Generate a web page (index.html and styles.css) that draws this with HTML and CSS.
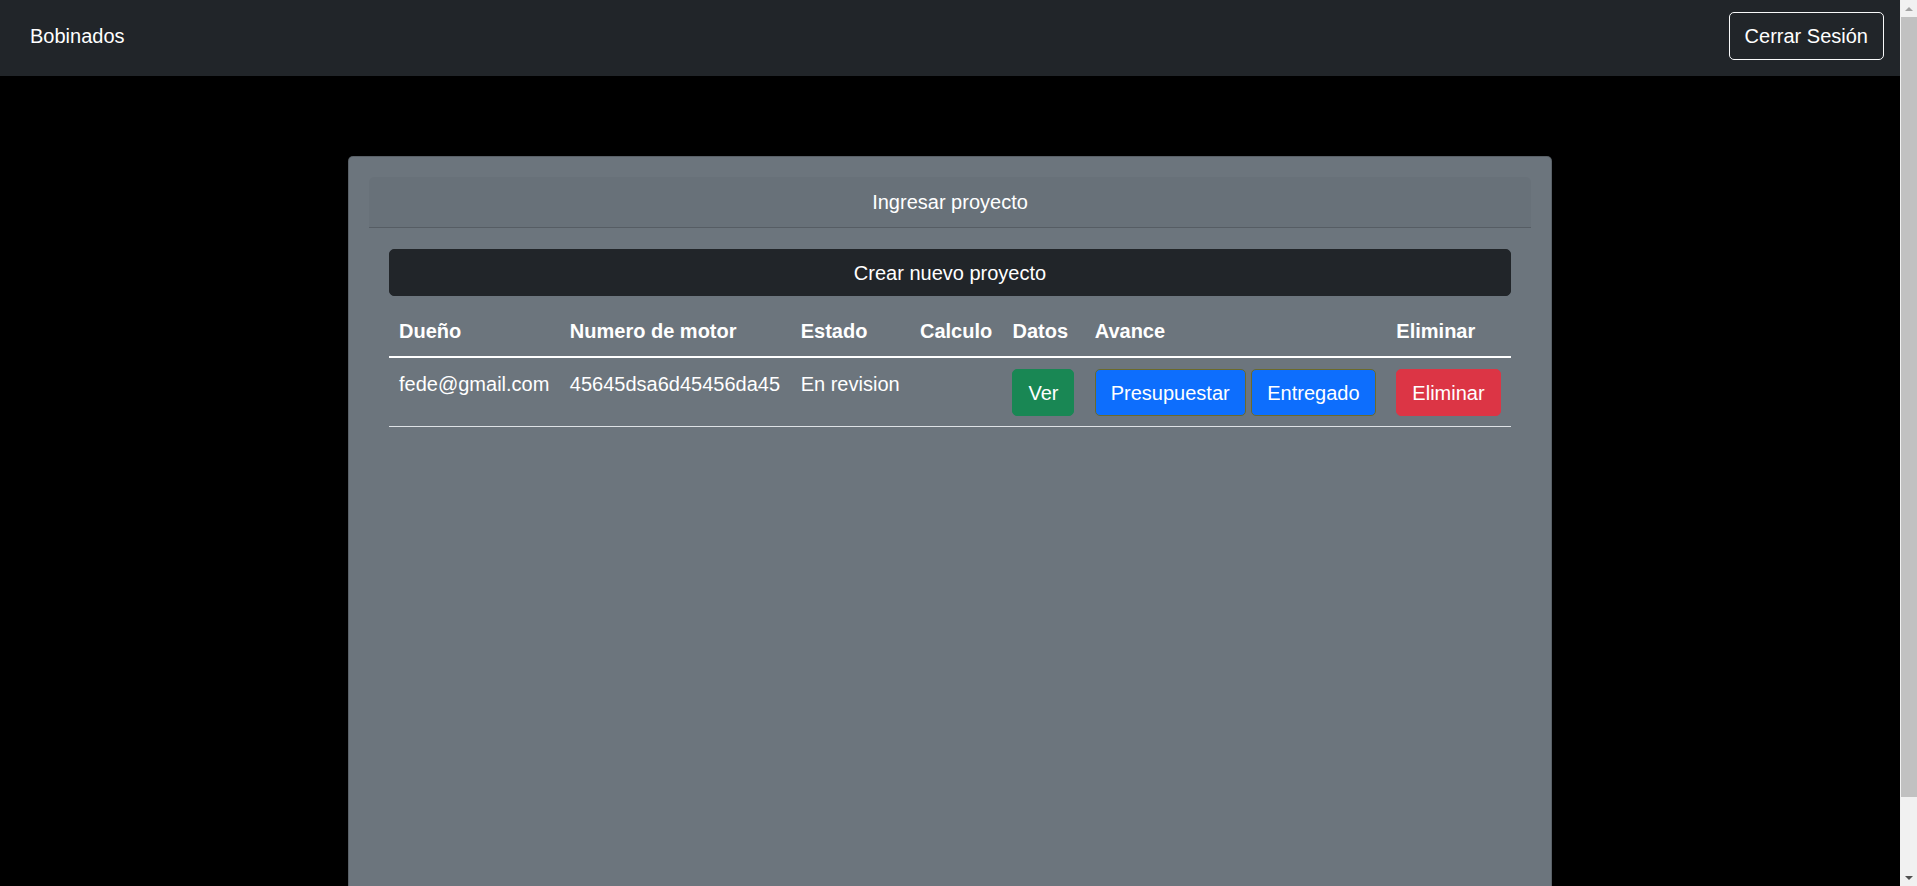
FILE: index.html
```html
<!DOCTYPE html>
<html lang="es">
<head>
<meta charset="utf-8">
<title>Bobinados</title>
<link rel="stylesheet" href="styles.css">
</head>
<body>
<nav class="navbar">
  <span class="brand">Bobinados</span>
  <button class="btn btn-outline-light">Cerrar Sesión</button>
</nav>
<main class="page">
  <section class="card">
    <div class="panel">
      <div class="panel-header">Ingresar proyecto</div>
      <div class="panel-body">
        <button class="btn btn-dark btn-block">Crear nuevo proyecto</button>
        <table class="table">
          <thead>
            <tr>
              <th>Dueño</th>
              <th>Numero de motor</th>
              <th>Estado</th>
              <th>Calculo</th>
              <th>Datos</th>
              <th>Avance</th>
              <th>Eliminar</th>
            </tr>
          </thead>
          <tbody>
            <tr>
              <td>fede@gmail.com</td>
              <td>45645dsa6d45456da45</td>
              <td>En revision</td>
              <td></td>
              <td><button class="btn btn-success">Ver</button></td>
              <td><button class="btn btn-primary">Presupuestar</button> <button class="btn btn-primary">Entregado</button></td>
              <td><button class="btn btn-danger">Eliminar</button></td>
            </tr>
          </tbody>
        </table>
      </div>
    </div>
  </section>
</main>
<div class="scrollbar" aria-hidden="true">
  <div class="scroll-arrow scroll-up"></div>
  <div class="scroll-track"><div class="scroll-thumb"></div></div>
  <div class="scroll-arrow scroll-down"></div>
</div>
</body>
</html>
```

FILE: styles.css
```css
html {
  font-size: 20px;
}

body {
  margin: 0 17px 0 0;
  background: #000;
  color: #fff;
  font-family: "Liberation Sans", Arial, sans-serif;
  font-size: 20px;
  line-height: 1.5;
}

.navbar {
  display: flex;
  justify-content: space-between;
  align-items: center;
  height: 76px;
  box-sizing: border-box;
  padding: 0 16px 4px 30px;
  background: #212529;
}

.brand {
  font-size: 20px;
  line-height: 30px;
}

.btn {
  display: inline-block;
  font-family: inherit;
  font-size: 20px;
  line-height: 30px;
  padding: 7.5px 15px;
  border: 1px solid transparent;
  border-radius: 5px;
  color: #fff;
  background: transparent;
  cursor: pointer;
  vertical-align: middle;
}

.btn-outline-light {
  padding: 8px 15px;
  border-color: #f8f9fa;
}

.btn-dark {
  background: #212529;
  border-color: #212529;
}

.btn-block {
  display: block;
  width: 100%;
  margin-bottom: 10px;
}

.btn-success {
  background: #198754;
  border-color: #198754;
}

.btn-primary {
  background: #0d6efd;
  border-color: #6b6a2a;
}

.btn-danger {
  background: #dc3545;
  border-color: #dc3545;
}

.page {
  padding-top: 80px;
}

.card {
  width: 1204px;
  min-height: 800px;
  margin: 0 auto;
  box-sizing: border-box;
  padding: 20px;
  background: #6c757d;
  border: 1px solid rgba(0, 0, 0, 0.175);
  border-radius: 5px;
}

.panel-header {
  padding: 10px 20px;
  line-height: 30px;
  text-align: center;
  background: rgba(0, 0, 0, 0.03);
  border-bottom: 1px solid rgba(0, 0, 0, 0.175);
  border-radius: 5px 5px 0 0;
}

.panel-body {
  padding: 21px 20px 20px;
}

.table {
  width: 100%;
  border-collapse: collapse;
}

.table th,
.table td {
  padding: 10px;
  text-align: left;
  vertical-align: top;
  white-space: nowrap;
}

.table th {
  font-weight: bold;
  border-bottom: 2px solid #fff;
}

.table td {
  padding-top: 11px;
  border-bottom: 1px solid #dee2e6;
}

.scrollbar {
  position: fixed;
  top: 0;
  right: 0;
  width: 17px;
  height: 100%;
  display: flex;
  flex-direction: column;
  background: #f1f1f1;
}

.scroll-arrow {
  height: 17px;
  flex: none;
  display: flex;
  align-items: center;
  justify-content: center;
}

.scroll-up::before {
  content: "";
  border-left: 4px solid transparent;
  border-right: 4px solid transparent;
  border-bottom: 4px solid #a3a3a3;
}

.scroll-down::before {
  content: "";
  border-left: 4px solid transparent;
  border-right: 4px solid transparent;
  border-top: 4px solid #505050;
}

.scroll-track {
  flex: 1;
  padding: 0 0 0 1px;
}

.scroll-thumb {
  height: 780px;
  background: #c1c1c1;
}
```
